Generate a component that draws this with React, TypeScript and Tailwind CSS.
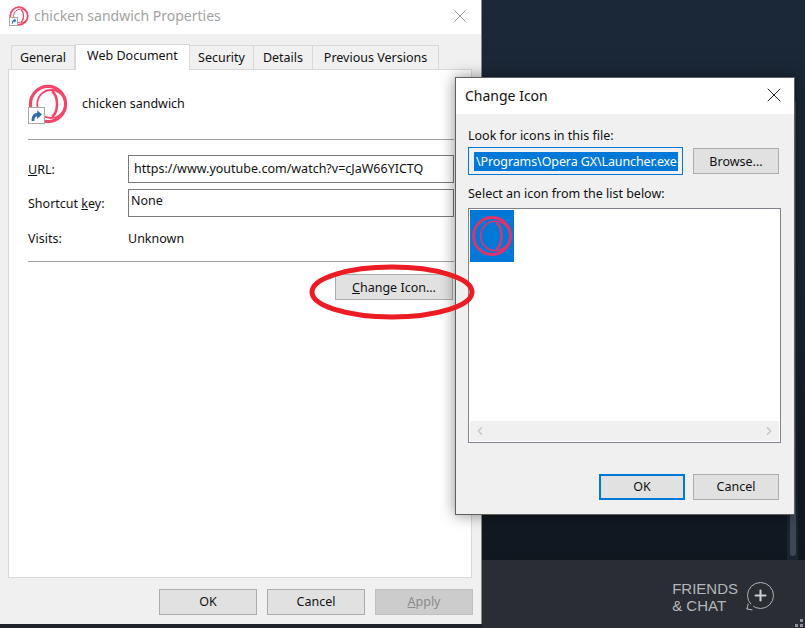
import { X, ChevronLeft, ChevronRight, Plus } from "lucide-react"

const tabs = ["General", "Web Document", "Security", "Details", "Previous Versions"]
const tabWidths: Record<string, string> = {
  General: "w-[64px]",
  "Web Document": "w-[115px]",
  Security: "w-[65px]",
  Details: "w-[60px]",
  "Previous Versions": "w-[127px]",
}

function OperaIcon({ className, color = "#f2476a", sw = 10 }: { className: string; color?: string; sw?: number }) {
  return (
    <svg viewBox="0 0 100 100" className={className} fill="none" stroke={color}>
      <circle cx="50" cy="50" r="44" strokeWidth={sw} />
      <circle cx="58" cy="50" r="35" strokeWidth={sw * 0.55} />
      <path d="M62 20 C76 32 76 68 62 80" strokeWidth={sw * 0.8} strokeLinecap="round" />
    </svg>
  )
}

function ShortcutBadge({ className }: { className: string }) {
  return (
    <span className={`absolute grid place-items-center border border-[#a8a8a8] bg-white ${className}`}>
      <svg viewBox="0 0 16 16" className="h-[85%] w-[85%]">
        <path d="M2 15 C2 8 5 5 9 5 L9 1.5 L15 7 L9 12.5 L9 9 C6.5 9 5.5 11 5.5 15 Z" fill="#2f6bb0" />
      </svg>
    </span>
  )
}

function Btn({ label, className = "", disabled = false }: { label: React.ReactNode; className?: string; disabled?: boolean }) {
  return (
    <div
      className={`grid h-[26px] place-items-center border text-[12.5px] ${
        disabled ? "border-[#bfbfbf] bg-[#cccccc] text-[#8a8a8a]" : "border-[#adadad] bg-[#e1e1e1] text-[#111]"
      } ${className}`}
    >
      <span>{label}</span>
    </div>
  )
}

function PropertiesWindow() {
  return (
    <div className="flex h-[624px] w-[482px] shrink-0 flex-col border-r border-[#8a8a8a] bg-[#f0f0f0]">
      <div className="flex h-[34px] shrink-0 items-center bg-white pb-[3px] pl-[9px] pr-[9px]">
        <span className="relative mr-[5px] block h-[20px] w-[20px]">
          <OperaIcon className="h-[20px] w-[20px]" sw={9} />
          <ShortcutBadge className="bottom-0 left-0 h-[9px] w-[9px]" />
        </span>
        <span className="text-[14px] text-[#a3a3a3]">chicken sandwich Properties</span>
        <X className="ml-auto h-[24px] w-[24px] text-[#8c8c8c]" strokeWidth={0.8} />
      </div>

      <div className="flex flex-1 flex-col px-[8px]">
        <div className="flex h-[35px] items-end pl-[4px]">
          {tabs.map((t) => {
            const active = t === "Web Document"
            return (
              <div
                key={t}
                className={`grid place-items-center border border-[#d9d9d9] text-[12.5px] text-[#111] ${tabWidths[t]} ${
                  active ? "relative z-10 -mb-px h-[26px] border-b-0 bg-white pb-[3px]" : "-ml-px h-[24px] border-b-0 bg-[#f0f0f0] pt-[2px]"
                }`}
              >
                {t}
              </div>
            )
          })}
        </div>

        <div className="flex h-[509px] w-[464px] flex-col border border-[#d9d9d9] bg-white pl-[19px] pr-[17px] text-[12.5px] text-[#111]">
          <div className="flex h-[70px] shrink-0 items-center border-b border-[#a0a0a0] pb-[1px]">
            <span className="relative mr-[14px] block h-[40px] w-[40px]">
              <OperaIcon className="h-[40px] w-[40px]" sw={8} />
              <ShortcutBadge className="bottom-0 left-0 h-[17px] w-[17px]" />
            </span>
            <span>chicken sandwich</span>
          </div>

          <div className="mt-[15px] flex h-[28px] items-center">
            <span className="w-[100px] pt-[2px]"><u>U</u>RL:</span>
            <div className="flex h-[28px] w-[326px] -mr-[3px] items-center border border-[#7a7a7a] pl-[5px]">
              https://www.youtube.com/watch?v=cJaW66YICTQ
            </div>
          </div>
          <div className="mt-[6px] flex h-[28px] items-center">
            <span className="w-[100px] pt-[2px]">Shortcut <u>k</u>ey:</span>
            <div className="h-[28px] w-[326px] -mr-[3px] border border-[#7a7a7a] pl-[2px] leading-[21px]">None</div>
          </div>
          <div className="mt-[12px] flex h-[20px] items-center">
            <span className="w-[100px]">Visits:</span>
            <span>Unknown</span>
          </div>
          <div className="mt-[12px] h-px bg-[#a0a0a0]" />
          <div className="mt-[12px] flex justify-end pr-px">
            <Btn className="w-[118px] pt-[2px]" label={<><u>C</u>hange Icon...</>} />
          </div>
        </div>

        <div className="mt-[11px] flex w-[465px] justify-end gap-[10px]">
          <Btn className="w-[98px]" label="OK" />
          <Btn className="w-[98px]" label="Cancel" />
          <Btn className="w-[98px]" disabled label={<><u>A</u>pply</>} />
        </div>
      </div>
    </div>
  )
}

function ChangeIconDialog() {
  return (
    <div className="absolute left-[455px] top-[77px] flex h-[438px] w-[340px] flex-col border border-[#5f5f5f] bg-[#f0f0f0] font-['Noto_Sans',sans-serif] text-[12.5px] text-[#111] shadow-[0_0_14px_rgba(0,0,0,0.45)]">
      <div className="flex h-[36px] shrink-0 items-center justify-between bg-white pb-[2px] pl-[9px] pr-[8px]">
        <span className="text-[14px]">Change Icon</span>
        <X className="h-[24px] w-[24px] text-[#222]" strokeWidth={1} />
      </div>
      <div className="flex flex-1 flex-col pl-[12px] pr-[15px]">
        <div className="mt-[13px] h-[18px] leading-[18px]">Look for icons in this file:</div>
        <div className="mt-[2px] flex items-start justify-between">
          <div className="flex h-[28px] w-[215px] items-center overflow-hidden border border-[#0078d7] pl-[5px]">
            <span className="block h-[19px] w-[204px] whitespace-nowrap bg-[#0078d7] pl-[2px] leading-[19px] tracking-[-0.1px] text-white">
              \Programs\Opera GX\Launcher.exe
            </span>
          </div>
          <Btn className="mt-[1px] w-[86px] pt-[3px]" label="Browse..." />
        </div>
        <div className="mt-[10px] h-[18px] leading-[18px]">Select an icon from the list below:</div>
        <div className="mt-[5px] flex h-[235px] w-[313px] flex-col border border-[#82828f] bg-white p-px">
          <div className="grid h-[52px] w-[44px] place-items-center bg-[#0078d7]">
            <OperaIcon className="h-[42px] w-[42px]" color="#e0336a" sw={7} />
          </div>
          <div className="mt-auto flex h-[20px] items-center justify-between bg-[#f0f0f0] px-[3px] text-[#c4c4c4]">
            <ChevronLeft className="h-[14px] w-[14px]" strokeWidth={2} />
            <ChevronRight className="h-[14px] w-[14px]" strokeWidth={2} />
          </div>
        </div>
        <div className="mt-[31px] flex justify-end gap-[8px]">
          <Btn className="w-[86px] border-2 !border-[#0078d7]" label="OK" />
          <Btn className="w-[86px]" label="Cancel" />
        </div>
      </div>
    </div>
  )
}

export default function App() {
  return (
    <div className="relative flex h-[628px] w-[805px] overflow-hidden bg-[#1f2329] font-['Noto_Sans',sans-serif]">
      <PropertiesWindow />

      <div className="flex flex-1 flex-col">
        <div className="flex flex-1 justify-end bg-gradient-to-b from-[#1b2838] via-[#1a2533] to-[#10171f] pr-[7px]">
          <div className="mt-[100px] flex w-[11px] justify-center bg-[#1a2530]">
            <div className="mb-[4px] w-[6px] rounded-[3px] bg-[#3d4753]" />
          </div>
        </div>
        <div className="relative flex h-[68px] shrink-0 items-start justify-end bg-[#2a2d33] pr-[31px] pt-[20px]">
          <div className="mr-[9px] font-['Liberation_Sans',sans-serif] text-[15px] leading-[17px] text-[#b3b7bc]">
            FRIENDS
            <br />& CHAT
          </div>
          <span className="relative mt-[2px] grid h-[27px] w-[27px] place-items-center rounded-full border-[1.5px] border-[#b3b7bc]">
            <Plus className="h-[17px] w-[17px] text-[#c9ccd0]" strokeWidth={3} />
            <span className="absolute -bottom-[2px] -left-[1px] h-[6px] w-[6px] rotate-12 border-b-[1.5px] border-l-[1.5px] border-[#b3b7bc] bg-[#2a2d33]" />
          </span>
          <div className="absolute bottom-[1px] right-[2px] grid grid-cols-2 gap-[2px]">
            <span />
            <span className="h-[3px] w-[3px] bg-[#8b8f95]" />
            <span className="h-[3px] w-[3px] bg-[#8b8f95]" />
            <span className="h-[3px] w-[3px] bg-[#8b8f95]" />
          </div>
        </div>
      </div>

      <ChangeIconDialog />

      <svg className="absolute left-[305px] top-[260px] h-[64px] w-[175px]" viewBox="0 0 175 64" fill="none">
        <ellipse cx="87" cy="32" rx="80" ry="25" stroke="#ed1c24" strokeWidth="5" />
      </svg>
    </div>
  )
}
